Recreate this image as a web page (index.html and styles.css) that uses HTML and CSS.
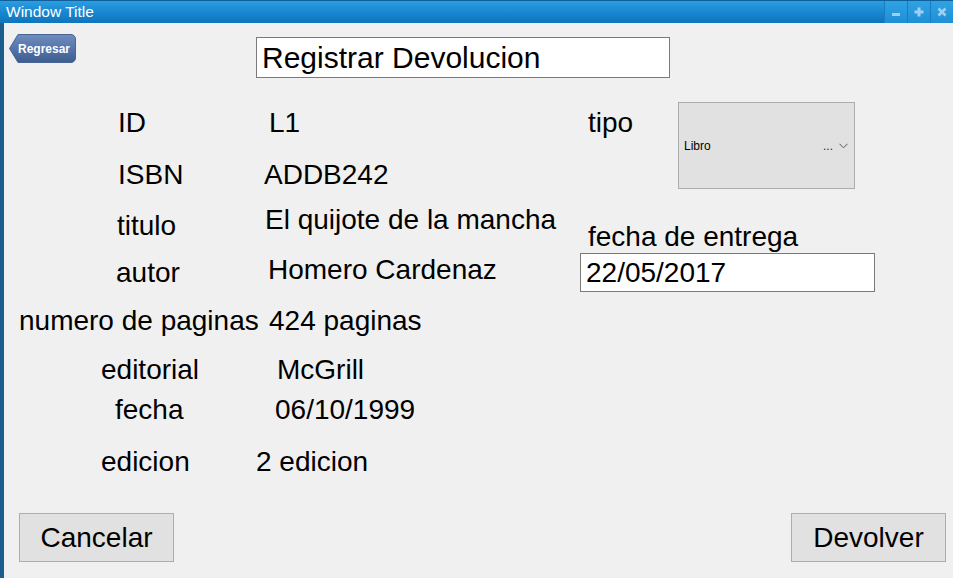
FILE: index.html
```html
<!DOCTYPE html>
<html lang="es">
<head>
<meta charset="utf-8">
<title>Registrar Devolucion</title>
<link rel="stylesheet" href="styles.css">
</head>
<body>
<div class="window">
  <div class="titlebar">
    <span class="wtitle">Window Title</span>
    <div class="wbtns">
      <span class="wbtn"><svg width="10" height="10" viewBox="0 0 10 10"><rect x="1" y="6" width="8" height="3" fill="#9fd0f2"/></svg></span>
      <span class="wbtn"><svg width="10" height="10" viewBox="0 0 10 10"><path d="M3.5 0.5h3v3h3v3h-3v3h-3v-3h-3v-3h3z" fill="#9fd0f2"/></svg></span>
      <span class="wbtn"><svg width="10" height="10" viewBox="0 0 10 10"><path d="M1.5 1.5L8.5 8.5M8.5 1.5L1.5 8.5" stroke="#9fd0f2" stroke-width="2.6"/></svg></span>
    </div>
  </div>
  <div class="content">
    <div class="toprow">
      <button class="back">
        <svg class="backshape" width="67" height="29" viewBox="0 0 67 29">
          <defs>
            <linearGradient id="bg" x1="0" y1="0" x2="0" y2="1">
              <stop offset="0" stop-color="#6f8dbf"/>
              <stop offset="1" stop-color="#3d5c90"/>
            </linearGradient>
          </defs>
          <path d="M9 0.5H62a4.5 4.5 0 0 1 4.5 4.5V24a4.5 4.5 0 0 1-4.5 4.5H9L0.5 14.5Z" fill="url(#bg)" stroke="#4a6594" stroke-width="1"/>
        </svg>
        <span class="backtxt">Regresar</span>
      </button>
      <div class="heading">Registrar Devolucion</div>
    </div>
    <div class="main">
      <div class="fields">
        <div class="row r-id"><span class="lbl">ID</span><span class="val">L1</span></div>
        <div class="row r-isbn"><span class="lbl">ISBN</span><span class="val">ADDB242</span></div>
        <div class="row r-titulo"><span class="lbl">titulo</span><span class="val">El quijote de la mancha</span></div>
        <div class="row r-autor"><span class="lbl">autor</span><span class="val">Homero Cardenaz</span></div>
        <div class="row r-num"><span class="lbl">numero de paginas</span><span class="val">424 paginas</span></div>
        <div class="row r-edit"><span class="lbl">editorial</span><span class="val">McGrill</span></div>
        <div class="row r-fecha"><span class="lbl">fecha</span><span class="val">06/10/1999</span></div>
        <div class="row r-edic"><span class="lbl">edicion</span><span class="val">2 edicion</span></div>
      </div>
      <div class="side">
        <div class="tiporow">
          <span class="tipo">tipo</span>
          <div class="combo">
            <span class="combotxt">Libro</span>
            <span class="comboend">...
              <svg width="9" height="6" viewBox="0 0 9 6"><path d="M0.5 0.8L4.5 4.8L8.5 0.8" fill="none" stroke="#555" stroke-width="1"/></svg>
            </span>
          </div>
        </div>
        <div class="entrega">fecha de entrega</div>
        <div class="datefield">22/05/2017</div>
      </div>
    </div>
    <div class="footer">
      <button class="btn">Cancelar</button>
      <button class="btn">Devolver</button>
    </div>
  </div>
</div>
</body>
</html>
```
FILE: styles.css
```css
* { box-sizing: border-box; }
html, body { margin: 0; padding: 0; }
body {
  width: 953px;
  height: 578px;
  overflow: hidden;
  font-family: "Liberation Sans", Arial, sans-serif;
  background: #f0f0f0;
}
.window {
  width: 953px;
  height: 578px;
  display: flex;
  flex-direction: column;
  border-left: 4px solid #1b5d8c;
  background: #f0f0f0;
}
.titlebar {
  height: 23px;
  flex: none;
  display: flex;
  align-items: center;
  justify-content: space-between;
  background: linear-gradient(#2b9de2, #1786cf 55%, #0f74bb);
  border-top: 1px solid #0f5f99;
  margin-left: -4px;
  padding-left: 6px;
}
.wtitle {
  color: #fff;
  font-size: 15.5px;
  line-height: 22px;
}
.wbtns {
  display: flex;
  height: 22px;
}
.wbtn {
  width: 23px;
  height: 22px;
  display: flex;
  align-items: center;
  justify-content: center;
  background: linear-gradient(#2fa2e4, #1f8fd6);
  border-left: 1px solid #1a7cc0;
}
.content {
  flex: 1;
  display: flex;
  flex-direction: column;
  min-height: 0;
}
.toprow {
  display: flex;
  align-items: flex-start;
  height: 55px;
  flex: none;
}
.back {
  position: relative;
  margin: 11px 0 0 5px;
  width: 67px;
  height: 29px;
  padding: 0;
  border: 0;
  background: transparent;
  display: flex;
  align-items: center;
  justify-content: center;
}
.backshape {
  position: absolute;
  left: 0;
  top: 0;
}
.backtxt {
  position: relative;
  color: #fff;
  font-family: "Liberation Sans", Arial, sans-serif;
  font-size: 12px;
  font-weight: bold;
  padding-left: 3px;
}
.heading {
  margin: 14px 0 0 180px;
  width: 414px;
  height: 41px;
  background: #fff;
  border: 1px solid #7a7a7a;
  font-size: 30px;
  line-height: 39px;
  padding-left: 5px;
  color: #000;
}
.main {
  display: flex;
  flex: none;
}
.fields {
  width: 576px;
  display: flex;
  flex-direction: column;
}
.row {
  display: flex;
  align-items: flex-start;
  font-size: 28px;
  line-height: 30px;
  color: #000;
}
.lbl, .val { display: block; white-space: nowrap; }
.r-id { margin-top: 30px; }
.r-id .lbl { margin-left: 114px; width: 151px; }
.r-isbn { margin-top: 22px; }
.r-isbn .lbl { margin-left: 114px; width: 146px; }
.r-titulo { margin-top: 15px; }
.r-titulo .lbl { margin-left: 113px; width: 148px; margin-top: 6px; }
.r-autor { margin-top: 14px; }
.r-autor .lbl { margin-left: 112px; width: 152px; margin-top: 3px; }
.r-num { margin-top: 18px; }
.r-num .lbl { margin-left: 15px; width: 250px; }
.r-edit { margin-top: 19px; }
.r-edit .lbl { margin-left: 97px; width: 176px; }
.r-fecha { margin-top: 10px; }
.r-fecha .lbl { margin-left: 111px; width: 160px; }
.r-edic { margin-top: 22px; }
.r-edic .lbl { margin-left: 97px; width: 155px; }
.side {
  display: flex;
  flex-direction: column;
  align-items: flex-start;
}
.tiporow {
  display: flex;
  align-items: flex-start;
  margin-top: 24px;
}
.tipo {
  font-size: 28px;
  line-height: 30px;
  margin: 6px 0 0 8px;
  width: 90px;
}
.combo {
  width: 177px;
  height: 87px;
  background: #e1e1e1;
  border: 1px solid #adadad;
  display: flex;
  align-items: center;
  justify-content: space-between;
  padding: 0 6px 0 5px;
  font-size: 12px;
  color: #000;
}
.comboend {
  display: flex;
  align-items: center;
  gap: 6px;
  color: #333;
}
.entrega {
  font-size: 28px;
  line-height: 30px;
  margin: 33px 0 0 8px;
  color: #000;
}
.datefield {
  margin-top: 1px;
  width: 295px;
  height: 39px;
  background: #fff;
  border: 1px solid #7a7a7a;
  font-size: 28px;
  line-height: 37px;
  padding-left: 5px;
  color: #000;
}
.footer {
  margin-top: auto;
  display: flex;
  justify-content: space-between;
  padding: 0 7px 16px 15px;
}
.btn {
  width: 155px;
  height: 49px;
  background: #e1e1e1;
  border: 1px solid #adadad;
  font-family: "Liberation Sans", Arial, sans-serif;
  font-size: 28px;
  color: #000;
  padding: 0;
}
```
